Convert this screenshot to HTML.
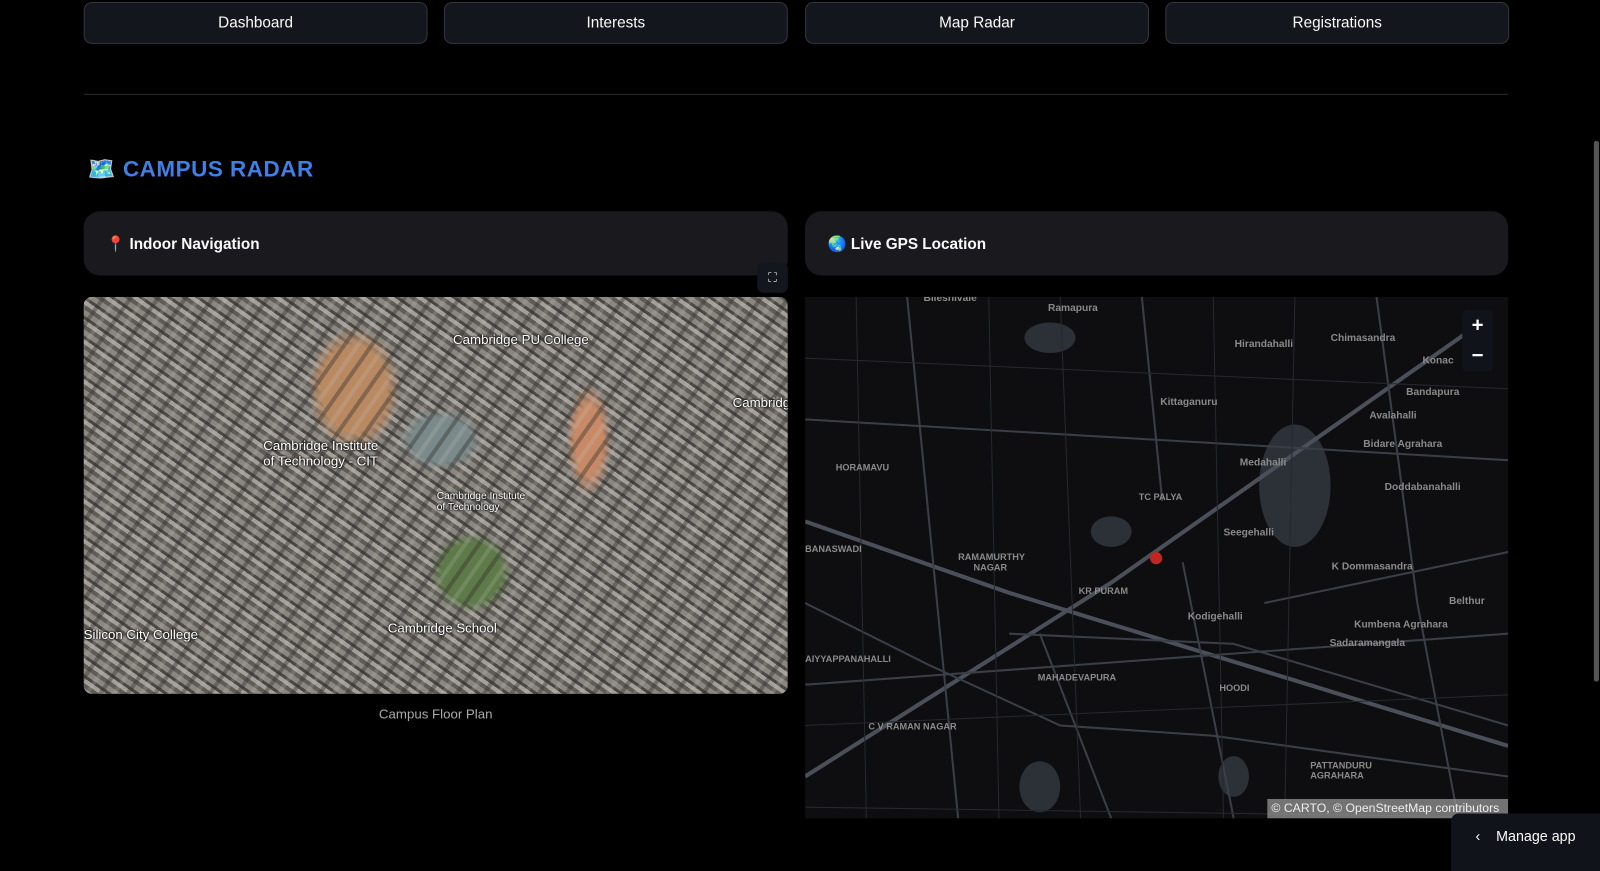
<!DOCTYPE html>
<html><head><meta charset="utf-8"><style>
*{box-sizing:border-box;margin:0;padding:0}
body{width:1600px;height:854px;background:#000;font-family:"Liberation Sans",sans-serif;color:#fafafa;position:relative;overflow:hidden}
#w{position:absolute;left:0;top:0;width:1568px;height:837px;transform:scale(1.0204);transform-origin:0 0}
.btn{position:absolute;top:2px;height:41px;width:337px;background:#13161d;border:1px solid #33363e;border-radius:8px;text-align:center;line-height:39px;font-size:15px}
.card{position:absolute;top:207px;height:63px;background:#1a1a1e;border-radius:16px;font-size:15px;font-weight:bold;padding:23px 0 0 22px}
.lbl{position:absolute;font-size:10px;color:#8a8a8a;font-weight:bold;white-space:nowrap}
.sl{position:absolute;font-size:12px;color:#fff;text-shadow:0 0 2px #000,0 0 2px #000;white-space:nowrap}
</style></head><body><div id="w">
<div class="btn" style="left:82px">Dashboard</div>
<div class="btn" style="left:435px">Interests</div>
<div class="btn" style="left:789px">Map Radar</div>
<div class="btn" style="left:1142px">Registrations</div>
<div style="position:absolute;left:82px;top:92px;width:1396px;height:1px;background:#2a2a2a"></div>
<div style="position:absolute;left:86px;top:153px;font-size:22px;font-weight:bold;color:#3f7fe6;letter-spacing:0.5px">🗺️ CAMPUS RADAR</div>
<div class="card" style="left:82px;width:690px"><span style="color:#e0455a">📍</span> Indoor Navigation</div>
<div class="card" style="left:789px;width:689px">🌏 Live GPS Location</div>
<div style="position:absolute;left:742px;top:257px;width:30px;height:30px;background:#13161d;border-radius:6px;color:#ddd;font-size:12px;text-align:center;line-height:30px">⛶</div>
<div style="position:absolute;left:82px;top:291px;width:690px;height:389px;border-radius:8px;overflow:hidden;background:
radial-gradient(ellipse 45px 60px at 265px 90px,#b98a62 0,#b98a62 70%,transparent 100%),
radial-gradient(ellipse 22px 55px at 495px 140px,#c88a66 0,#c88a66 60%,transparent 100%),
radial-gradient(ellipse 40px 40px at 380px 270px,#5d7a48 0,#5d7a48 70%,transparent 100%),
radial-gradient(ellipse 40px 30px at 350px 140px,#7a8a8a 0,#7a8a8a 70%,transparent 100%),
repeating-linear-gradient(35deg,#8a8680 0 5px,#5f5c58 5px 9px,#a29e98 9px 13px,#4a4845 13px 16px),
#706c67">
<div style="position:absolute;inset:0;background:repeating-linear-gradient(-55deg,rgba(50,48,45,.4) 0 4px,transparent 4px 11px,rgba(200,196,190,.2) 11px 15px,transparent 15px 22px)"></div>
<div class="sl" style="left:362px;top:34px;font-size:13px">Cambridge PU College</div>
<div class="sl" style="left:176px;top:138px;font-size:13px">Cambridge Institute<br>of Technology - CIT</div>
<div class="sl" style="left:636px;top:96px;font-size:13px">Cambridge</div>
<div class="sl" style="left:346px;top:190px;font-size:10px">Cambridge Institute<br>of Technology</div>
<div class="sl" style="left:298px;top:317px;font-size:13px">Cambridge School</div>
<div class="sl" style="left:0;top:323px;font-size:13px">Silicon City College</div>
</div>
<div style="position:absolute;left:82px;top:692px;width:690px;text-align:center;font-size:13px;color:#aaa">Campus Floor Plan</div>
<div style="position:absolute;left:789px;top:291px;width:689px;height:511px;background:#0e0e10;overflow:hidden">
<svg width="689" height="511" style="position:absolute;left:0;top:0">
<g fill="#2c3138"><ellipse cx="480" cy="185" rx="35" ry="60"/><ellipse cx="240" cy="40" rx="25" ry="15"/><ellipse cx="230" cy="480" rx="20" ry="25"/><ellipse cx="420" cy="470" rx="15" ry="20"/><ellipse cx="300" cy="230" rx="20" ry="15"/></g>
<g stroke="#4a4f5a" stroke-width="4" fill="none"><path d="M0 470 L300 280 L670 20"/><path d="M0 220 L200 290 L689 440"/></g>
<g stroke="#3a3e47" stroke-width="2" fill="none"><path d="M200 330 L420 340 L689 420"/><path d="M230 330 L300 511"/><path d="M370 260 L420 511"/><path d="M0 380 L689 330"/><path d="M100 0 L150 511"/><path d="M330 0 L350 200"/><path d="M560 0 L600 300 L640 511"/><path d="M0 120 L689 160"/><path d="M450 300 L689 250"/><path d="M0 300 L120 360 L250 420 L400 430 L689 470"/></g>
<g stroke="#26292f" stroke-width="1" fill="none"><path d="M50 0 L60 511 M250 0 L270 511 M480 0 L470 511 M0 60 L689 90 M0 420 L689 390 M0 500 L689 510 M180 0 L190 511 M400 0 L410 511"/></g>
<circle cx="344" cy="256" r="6" fill="#c0261f"/>
</svg>
<div class="lbl" style="left:116px;top:-4px">Bileshivale</div>
<div class="lbl" style="left:238px;top:6px">Ramapura</div>
<div class="lbl" style="left:421px;top:41px">Hirandahalli</div>
<div class="lbl" style="left:515px;top:35px">Chimasandra</div>
<div class="lbl" style="left:605px;top:57px">Konac</div>
<div class="lbl" style="left:589px;top:88px">Bandapura</div>
<div class="lbl" style="left:348px;top:98px">Kittaganuru</div>
<div class="lbl" style="left:553px;top:111px">Avalahalli</div>
<div class="lbl" style="left:547px;top:139px">Bidare Agrahara</div>
<div class="lbl" style="left:426px;top:157px">Medahalli</div>
<div class="lbl" style="left:30px;top:162px;font-size:9px">HORAMAVU</div>
<div class="lbl" style="left:327px;top:191px;font-size:9px">TC PALYA</div>
<div class="lbl" style="left:568px;top:181px">Doddabanahalli</div>
<div class="lbl" style="left:410px;top:226px">Seegehalli</div>
<div class="lbl" style="left:0;top:242px;font-size:9px">BANASWADI</div>
<div class="lbl" style="left:150px;top:250px;font-size:9px">RAMAMURTHY<br>&nbsp;&nbsp;&nbsp;&nbsp;&nbsp;&nbsp;NAGAR</div>
<div class="lbl" style="left:516px;top:259px">K Dommasandra</div>
<div class="lbl" style="left:268px;top:283px;font-size:9px">KR PURAM</div>
<div class="lbl" style="left:631px;top:293px">Belthur</div>
<div class="lbl" style="left:375px;top:308px">Kodigehalli</div>
<div class="lbl" style="left:538px;top:316px">Kumbena Agrahara</div>
<div class="lbl" style="left:514px;top:334px">Sadaramangala</div>
<div class="lbl" style="left:0;top:350px;font-size:9px">AIYYAPPANAHALLI</div>
<div class="lbl" style="left:228px;top:368px;font-size:9px">MAHADEVAPURA</div>
<div class="lbl" style="left:406px;top:378px;font-size:9px">HOODI</div>
<div class="lbl" style="left:62px;top:416px;font-size:9px">C V RAMAN NAGAR</div>
<div class="lbl" style="left:495px;top:454px;font-size:9px">PATTANDURU<br>AGRAHARA</div>
<div style="position:absolute;left:644px;top:13px;width:30px;height:60px;background:#10131a;border-radius:4px;color:#fff;font-size:20px;font-weight:bold;text-align:center;line-height:30px">+<br>−</div>
<div style="position:absolute;left:453px;top:492px;width:236px;height:19px;background:rgba(150,150,150,.75);color:#eee;font-size:12px;line-height:19px;padding-left:4px">© CARTO, © OpenStreetMap contributors</div>
</div>
<div style="position:absolute;left:1422px;top:797px;width:178px;height:57px;background:#10131a;border-radius:8px 0 0 0;font-size:14px;padding:14px 0 0 24px">‹&nbsp;&nbsp;&nbsp;&nbsp;Manage app</div>
<div style="position:absolute;left:1562px;top:138px;width:5px;height:530px;background:#555;border-radius:3px"></div>
</div></body></html>
